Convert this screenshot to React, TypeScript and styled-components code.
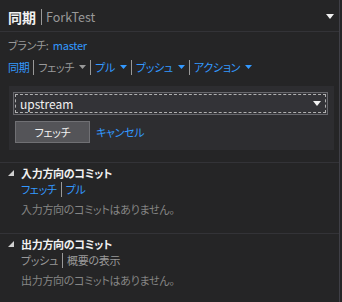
import styled, { createGlobalStyle } from "styled-components";

const GlobalStyle = createGlobalStyle`
  html, body {
    margin: 0;
    padding: 0;
    background: #252526;
  }
  body {
    font-family: "Noto Sans CJK JP", "Noto Sans", sans-serif;
    font-feature-settings: "palt";
    font-size: 11px;
    letter-spacing: -0.3px;
    color: #999999;
  }
`;

const BLUE = "#3399ff";
const GRAY = "#999999";

const Pane = styled.div`
  width: 339px;
  height: 302px;
  border-right: 1px solid #3f3f46;
  overflow: hidden;
`;

const Header = styled.div`
  display: flex;
  align-items: center;
  height: 29px;
  padding: 2px 5px 0 8px;
  border-bottom: 1px solid #333337;
  letter-spacing: 0;
`;

const Title = styled.span`
  font-size: 14px;
  font-weight: bold;
  color: #f1f1f1;
`;

const SubTitle = styled.span`
  font-size: 12.5px;
  color: ${GRAY};
  margin-left: 4px;
`;

const Bar = styled.span<{ $h?: number; $gap?: number }>`
  display: inline-block;
  width: 1px;
  height: ${(p) => p.$h ?? 15}px;
  background: #999999;
  margin: 0 ${(p) => p.$gap ?? 4}px;
`;

const HeaderArrow = styled.span`
  margin-left: auto;
  display: flex;
`;

const BranchRow = styled.div`
  margin: 5px 0 0 8px;
  line-height: 16px;
  height: 16px;
  color: ${GRAY};
`;

const Link = styled.span<{ $off?: boolean }>`
  color: ${(p) => (p.$off ? GRAY : BLUE)};
  cursor: pointer;
`;

const NavRow = styled.div`
  display: flex;
  align-items: center;
  margin: 6px 0 0 8px;
  height: 16px;
  line-height: 16px;
`;

const NavItem = styled.span<{ $off?: boolean }>`
  display: inline-flex;
  align-items: center;
  gap: 5px;
  color: ${(p) => (p.$off ? GRAY : BLUE)};
`;

const FetchPanel = styled.div`
  margin: 11px 0 0 9px;
  width: 325px;
  height: 64px;
  background: #2d2d30;
  padding: 6px 6px 0 4px;
  box-sizing: border-box;
`;

const Combo = styled.div`
  height: 23px;
  border: 1px solid #67676c;
  background: #333337;
  box-sizing: border-box;
  padding: 1px;
`;

const ComboFocus = styled.div`
  height: 100%;
  border: 1px dashed #b0b0b0;
  box-sizing: border-box;
  display: flex;
  align-items: center;
  padding: 0 4px;
  color: #f1f1f1;
  font-size: 12px;
  letter-spacing: 0;
`;

const ComboArrow = styled.span`
  margin-left: auto;
  display: flex;
`;

const ButtonRow = styled.div`
  display: flex;
  align-items: center;
  margin: 6px 0 0 2px;
  gap: 6px;
`;

const Button = styled.button`
  width: 75px;
  height: 22px;
  background: #545458;
  border: 1px solid #707074;
  color: #f1f1f1;
  font: inherit;
  letter-spacing: inherit;
  padding: 0;
`;

const Section = styled.div`
  border-top: 1px solid #333337;
  padding: 2px 0 16px 8px;
`;

const SectionHead = styled.div`
  display: flex;
  align-items: center;
  height: 16px;
  line-height: 16px;
  color: #f1f1f1;
  font-weight: bold;
  gap: 7px;
`;

const Indent = styled.div`
  margin-left: 13px;
`;

const LinkRow = styled.div`
  display: flex;
  align-items: center;
  height: 16px;
  line-height: 16px;
`;

const Empty = styled.div`
  margin-top: 4px;
  height: 16px;
  line-height: 16px;
  color: #858585;
`;

const SectionGap = styled.div`
  height: 12px;
`;

const Caret = ({ color }: { color: string }) => (
  <svg width="7" height="4" viewBox="0 0 7 4">
    <path d="M0 0H7L3.5 4Z" fill={color} />
  </svg>
);

const Expanded = () => (
  <svg width="6" height="6" viewBox="0 0 6 6">
    <path d="M6 0V6H0Z" fill="#d0d0d0" />
  </svg>
);

const DropArrow = () => (
  <svg width="8" height="5" viewBox="0 0 8 5">
    <path d="M0 0H8L4 5Z" fill="#f1f1f1" />
  </svg>
);

export default function App() {
  return (
    <>
      <GlobalStyle />
      <Pane>
        <Header>
          <Title>同期</Title>
          <Bar $h={16} $gap={0} style={{ marginLeft: 5 }} />
          <SubTitle>ForkTest</SubTitle>
          <HeaderArrow>
            <DropArrow />
          </HeaderArrow>
        </Header>

        <BranchRow>
          ブランチ:&nbsp; <Link>master</Link>
        </BranchRow>

        <NavRow>
          <NavItem>同期</NavItem>
          <Bar />
          <NavItem $off>
            フェッチ<Caret color={GRAY} />
          </NavItem>
          <Bar />
          <NavItem>
            プル<Caret color={BLUE} />
          </NavItem>
          <Bar />
          <NavItem>
            プッシュ<Caret color={BLUE} />
          </NavItem>
          <Bar />
          <NavItem>
            アクション<Caret color={BLUE} />
          </NavItem>
        </NavRow>

        <FetchPanel>
          <Combo>
            <ComboFocus>
              upstream
              <ComboArrow>
                <DropArrow />
              </ComboArrow>
            </ComboFocus>
          </Combo>
          <ButtonRow>
            <Button>フェッチ</Button>
            <Link>キャンセル</Link>
          </ButtonRow>
        </FetchPanel>

        <SectionGap />

        <Section>
          <SectionHead>
            <Expanded />
            入力方向のコミット
          </SectionHead>
          <Indent>
            <LinkRow>
              <Link>フェッチ</Link>
              <Bar />
              <Link>プル</Link>
            </LinkRow>
            <Empty>入力方向のコミットはありません。</Empty>
          </Indent>
        </Section>

        <Section>
          <SectionHead>
            <Expanded />
            出力方向のコミット
          </SectionHead>
          <Indent>
            <LinkRow>
              <Link $off>プッシュ</Link>
              <Bar />
              <Link $off>概要の表示</Link>
            </LinkRow>
            <Empty>出力方向のコミットはありません。</Empty>
          </Indent>
        </Section>
      </Pane>
    </>
  );
}
